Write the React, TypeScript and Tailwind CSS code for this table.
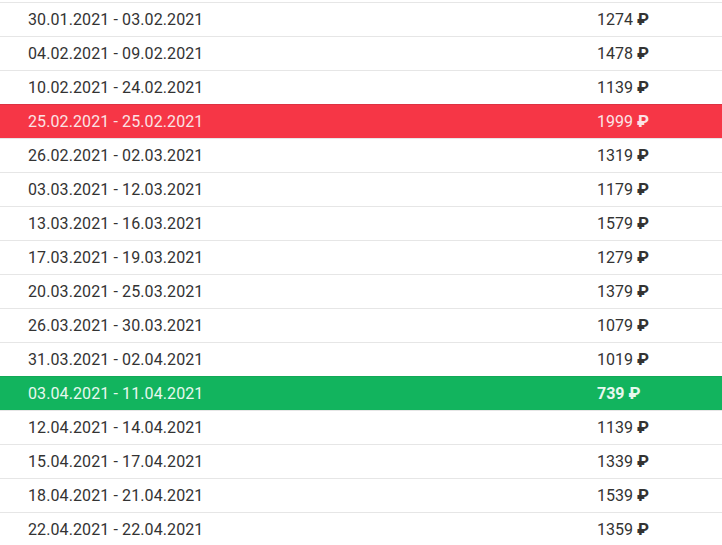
import React from "react";

interface Row {
  range: string;
  price: number;
  mark?: "red" | "green";
}

const ROWS: Row[] = [
  { range: "30.01.2021 - 03.02.2021", price: 1274 },
  { range: "04.02.2021 - 09.02.2021", price: 1478 },
  { range: "10.02.2021 - 24.02.2021", price: 1139 },
  { range: "25.02.2021 - 25.02.2021", price: 1999, mark: "red" },
  { range: "26.02.2021 - 02.03.2021", price: 1319 },
  { range: "03.03.2021 - 12.03.2021", price: 1179 },
  { range: "13.03.2021 - 16.03.2021", price: 1579 },
  { range: "17.03.2021 - 19.03.2021", price: 1279 },
  { range: "20.03.2021 - 25.03.2021", price: 1379 },
  { range: "26.03.2021 - 30.03.2021", price: 1079 },
  { range: "31.03.2021 - 02.04.2021", price: 1019 },
  { range: "03.04.2021 - 11.04.2021", price: 739, mark: "green" },
  { range: "12.04.2021 - 14.04.2021", price: 1139 },
  { range: "15.04.2021 - 17.04.2021", price: 1339 },
  { range: "18.04.2021 - 21.04.2021", price: 1539 },
  { range: "22.04.2021 - 22.04.2021", price: 1359 },
];

function PriceRow({ range, price, mark }: Row) {
  const rowClass =
    mark === "red"
      ? "bg-[#f63646] border-[#dc3242] text-[#fbe3e5]"
      : mark === "green"
        ? "bg-[#12b45e] border-[#12a857] text-[#e8f8ef]"
        : "bg-white border-[#e6e6e6] text-[#333333]";
  return (
    <div
      className={`grid grid-cols-[597px_1fr] h-[34px] items-center border-t ${rowClass}`}
    >
      <div className="pl-[28px] tracking-[0.1px]">{range}</div>
      <div className={mark === "green" ? "font-bold" : ""}>
        {price} <span className="font-bold text-[17px]">₽</span>
      </div>
    </div>
  );
}

export default function App() {
  return (
    <div className="w-[722px] h-[545px] overflow-hidden bg-white font-['Roboto',sans-serif] text-[16px] leading-none">
      <div className="pt-[2px]">
        {ROWS.map((row) => (
          <PriceRow key={row.range} {...row} />
        ))}
      </div>
    </div>
  );
}
